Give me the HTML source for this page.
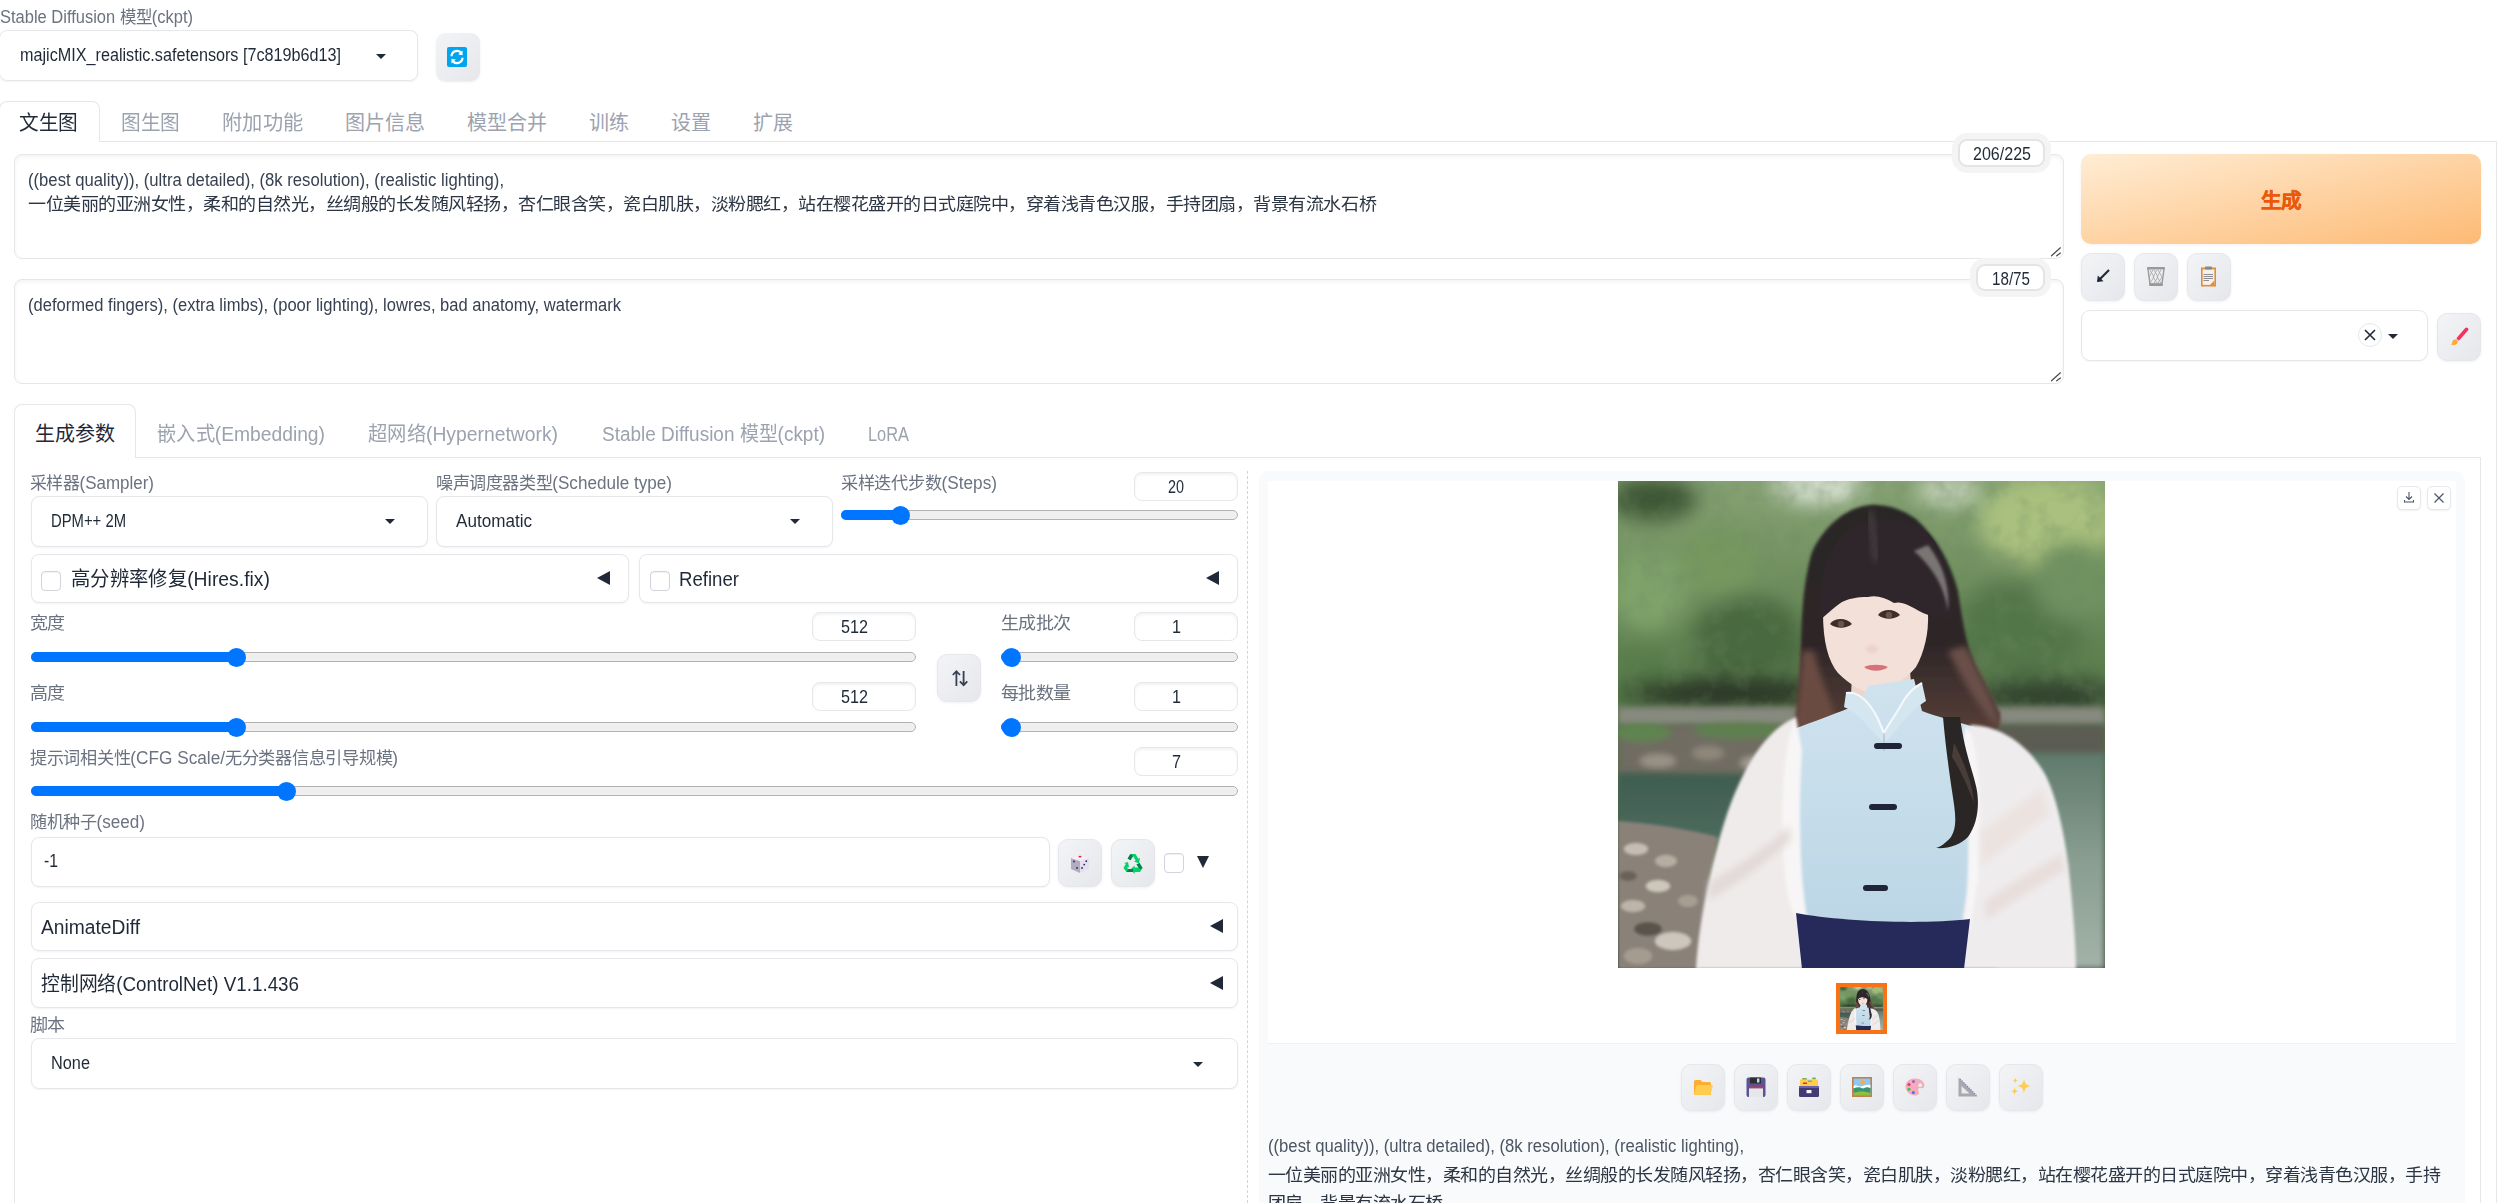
<!DOCTYPE html>
<html lang="zh-CN"><head><meta charset="utf-8"><style>*{margin:0;padding:0}
html,body{width:2505px;height:1203px;overflow:hidden;background:#fff}
body{position:relative;font-family:"Liberation Sans",sans-serif}
.a{position:absolute;box-sizing:border-box}
.t{position:absolute;white-space:pre;line-height:1;transform-origin:0 0}
svg.a{overflow:visible}
#t1{transform:scaleX(0.9420)}
#t2{transform:scaleX(0.9244)}
#t3{transform:scaleX(0.9833)}
#t4{transform:scaleX(0.9833)}
#t5{transform:scaleX(1.0125)}
#t6{transform:scaleX(1.0000)}
#t7{transform:scaleX(1.0000)}
#t8{transform:scaleX(1.0000)}
#t9{transform:scaleX(1.0000)}
#t10{transform:scaleX(1.0000)}
#t11{transform:scaleX(0.9522)}
#t12{transform:scaleX(1.0298)}
#t13{transform:scaleX(0.9458)}
#t14{transform:scaleX(0.9168)}
#t15{transform:scaleX(0.8676)}
#t16{transform:scaleX(1.0000)}
#t17{transform:scaleX(1.0000)}
#t18{transform:scaleX(0.9627)}
#t19{transform:scaleX(0.9659)}
#t20{transform:scaleX(0.9478)}
#t21{transform:scaleX(0.8195)}
#t22{transform:scaleX(0.9701)}
#t23{transform:scaleX(0.8475)}
#t24{transform:scaleX(0.9769)}
#t25{transform:scaleX(0.9767)}
#t26{transform:scaleX(0.9848)}
#t27{transform:scaleX(0.8218)}
#t28{transform:scaleX(0.9681)}
#t29{transform:scaleX(0.9305)}
#t30{transform:scaleX(1.0294)}
#t31{transform:scaleX(0.9246)}
#t32{transform:scaleX(1.0294)}
#t33{transform:scaleX(0.9246)}
#t34{transform:scaleX(1.0294)}
#t35{transform:scaleX(0.9246)}
#t36{transform:scaleX(1.0294)}
#t37{transform:scaleX(0.9246)}
#t38{transform:scaleX(0.9837)}
#t39{transform:scaleX(0.9246)}
#t40{transform:scaleX(0.9778)}
#t41{transform:scaleX(0.8996)}
#t42{transform:scaleX(0.9610)}
#t43{transform:scaleX(0.9397)}
#t44{transform:scaleX(1.0294)}
#t45{transform:scaleX(0.9320)}
#t46{transform:scaleX(0.9522)}
#t47{transform:scaleX(1.0290)}
#t48{transform:scaleX(1.0294)}</style></head><body>
<div id="t1" class="t" style="left:0.00px;top:9.19px;font-size:17.5px;color:#6b7280;font-weight:400;">Stable Diffusion 模型(ckpt)</div>
<div class="a" style="left:-1px;top:30px;width:419px;height:51px;border:1px solid #e5e7eb;border-radius:8px;box-shadow:0 1px 2px rgba(0,0,0,.05);background:#fff"></div>
<div id="t2" class="t" style="left:20.00px;top:47.19px;font-size:17.5px;color:#1f2937;font-weight:400;">majicMIX_realistic.safetensors [7c819b6d13]</div>
<div class="a" style="left:376px;top:54px;width:0;height:0;border-left:5px solid transparent;border-right:5px solid transparent;border-top:5px solid #1f2937"></div>
<div class="a" style="left:436px;top:33px;width:44px;height:48px;border-radius:9px;background:linear-gradient(135deg,#f3f4f6,#e5e7eb);box-shadow:0 1px 2px rgba(0,0,0,.08)"></div>
<svg class="a" style="left:447px;top:47px" width="20" height="20" viewBox="0 0 20 20"><rect width="20" height="20" rx="2" fill="#00a4ef"/><path d="M4.5 9.2 A5.5 5.5 0 0 1 14.6 6.4" stroke="#fff" stroke-width="2.2" fill="none"/><path d="M15.5 3.6 L15.6 8.2 L11.2 7.6 Z" fill="#fff"/><path d="M15.5 10.8 A5.5 5.5 0 0 1 5.4 13.6" stroke="#fff" stroke-width="2.2" fill="none"/><path d="M4.5 16.4 L4.4 11.8 L8.8 12.4 Z" fill="#fff"/></svg>
<div class="a" style="left:-1px;top:101px;width:101px;height:41px;border:1px solid #e5e7eb;border-bottom:none;border-radius:8px 8px 0 0;background:#fff"></div>
<div class="a" style="left:99px;top:141px;width:2398px;height:1px;background:#e5e7eb"></div>
<div class="a" style="left:2496px;top:141px;width:1px;height:1062px;background:#e5e7eb"></div>
<div id="t3" class="t" style="left:19.00px;top:112.57px;font-size:20px;color:#1f2937;font-weight:400;">文生图</div>
<div id="t4" class="t" style="left:121.00px;top:112.57px;font-size:20px;color:#9ca3af;font-weight:400;">图生图</div>
<div id="t5" class="t" style="left:222.00px;top:112.57px;font-size:20px;color:#9ca3af;font-weight:400;">附加功能</div>
<div id="t6" class="t" style="left:345.00px;top:112.57px;font-size:20px;color:#9ca3af;font-weight:400;">图片信息</div>
<div id="t7" class="t" style="left:467.00px;top:112.57px;font-size:20px;color:#9ca3af;font-weight:400;">模型合并</div>
<div id="t8" class="t" style="left:589.00px;top:112.57px;font-size:20px;color:#9ca3af;font-weight:400;">训练</div>
<div id="t9" class="t" style="left:671.00px;top:112.57px;font-size:20px;color:#9ca3af;font-weight:400;">设置</div>
<div id="t10" class="t" style="left:753.00px;top:112.57px;font-size:20px;color:#9ca3af;font-weight:400;">扩展</div>
<div class="a" style="left:14px;top:154px;width:2050px;height:105px;border:1px solid #e5e7eb;border-radius:8px;background:#fff;box-shadow:inset 0 2px 4px rgba(0,0,0,.05)"></div>
<div id="t11" class="t" style="left:28.00px;top:171.69px;font-size:17.5px;color:#374151;font-weight:400;">((best quality)), (ultra detailed), (8k resolution), (realistic lighting),</div>
<div id="t12" class="t" style="left:28.00px;top:195.69px;font-size:17.5px;color:#2b3543;font-weight:400;">一位美丽的亚洲女性，柔和的自然光，丝绸般的长发随风轻扬，杏仁眼含笑，瓷白肌肤，淡粉腮红，站在樱花盛开的日式庭院中，穿着浅青色汉服，手持团扇，背景有流水石桥</div>
<div class="a" style="left:14px;top:279px;width:2050px;height:105px;border:1px solid #e5e7eb;border-radius:8px;background:#fff;box-shadow:inset 0 2px 4px rgba(0,0,0,.05)"></div>
<div id="t13" class="t" style="left:28.00px;top:296.69px;font-size:17.5px;color:#374151;font-weight:400;">(deformed fingers), (extra limbs), (poor lighting), lowres, bad anatomy, watermark</div>
<svg class="a" style="left:2050px;top:246px" width="12" height="12" viewBox="0 0 12 12"><path d="M1.5 9.8 L10.4 1.8 M6.7 9.8 L10.4 7" stroke="#4a4a4a" stroke-width="1.2" stroke-linecap="round"/></svg>
<svg class="a" style="left:2050px;top:371px" width="12" height="12" viewBox="0 0 12 12"><path d="M1.5 9.8 L10.4 1.8 M6.7 9.8 L10.4 7" stroke="#4a4a4a" stroke-width="1.2" stroke-linecap="round"/></svg>
<div class="a" style="left:1952px;top:133px;width:99px;height:40px;border-radius:15px;background:#f4f4f5"></div>
<div class="a" style="left:1958px;top:139px;width:87px;height:28px;border:2px solid #e4e4e6;border-radius:9px;background:#fff"></div>
<div id="t14" class="t" style="left:1972.50px;top:146.19px;font-size:17.5px;color:#1f2937;font-weight:400;">206/225</div>
<div class="a" style="left:1970px;top:258px;width:81px;height:39px;border-radius:15px;background:#f4f4f5"></div>
<div class="a" style="left:1976px;top:264px;width:69px;height:27px;border:2px solid #e4e4e6;border-radius:9px;background:#fff"></div>
<div id="t15" class="t" style="left:1991.50px;top:271.19px;font-size:17.5px;color:#1f2937;font-weight:400;">18/75</div>
<div class="a" style="left:2081px;top:154px;width:400px;height:90px;border-radius:10px;background:linear-gradient(to bottom right,#ffedd5,#fdba74);box-shadow:0 1px 3px rgba(0,0,0,.06)"></div>
<div id="t16" class="t" style="left:2261.00px;top:191.15px;font-size:20.5px;color:#ea580c;font-weight:700;-webkit-text-stroke:0.35px #ea580c">生成</div>
<div class="a" style="left:2081px;top:253px;width:44px;height:48px;border:1px solid #e5e7eb;border-radius:10px;background:linear-gradient(to bottom right,#f3f4f6,#e5e7eb);box-shadow:0 1px 3px rgba(0,0,0,.06)"></div>
<div class="a" style="left:2134px;top:253px;width:44px;height:48px;border:1px solid #e5e7eb;border-radius:10px;background:linear-gradient(to bottom right,#f3f4f6,#e5e7eb);box-shadow:0 1px 3px rgba(0,0,0,.06)"></div>
<div class="a" style="left:2187px;top:253px;width:44px;height:48px;border:1px solid #e5e7eb;border-radius:10px;background:linear-gradient(to bottom right,#f3f4f6,#e5e7eb);box-shadow:0 1px 3px rgba(0,0,0,.06)"></div>
<svg class="a" style="left:2094px;top:267px" width="18" height="18" viewBox="0 0 18 18"><path d="M15 3 L4 14" stroke="#1f2937" stroke-width="2.2"/><path d="M3 15 L3.8 8.5 L9.5 14.2 Z" fill="#1f2937"/></svg>
<svg class="a" style="left:2145px;top:266px" width="22" height="22" viewBox="0 0 22 22"><rect x="2" y="1" width="18" height="2.6" rx="1" fill="#999"/><rect x="4" y="17.5" width="14" height="2.4" rx="1" fill="#999"/><path d="M3 3 L5 18 L17 18 L19 3" fill="none" stroke="#999" stroke-width="1.4"/><path d="M5 4 L9 11 L5 17 M9 4 L13 11 L9 17 M13 4 L17 11 L13 17 M8 4 L4 11 M12 4 L8 11 L12 17 M16 4 L12 11 L16 17" stroke="#aaa" stroke-width="0.9" fill="none"/></svg>
<svg class="a" style="left:2200px;top:266px" width="18" height="22" viewBox="0 0 18 22"><rect x="1" y="1.5" width="15" height="19" fill="#e48d2c"/><rect x="2.6" y="3.4" width="11.8" height="15.5" fill="#f3f0f5"/><rect x="5" y="0.5" width="7" height="3" rx="1" fill="#888"/><path d="M3.5 8.5 H13 M3.5 10.5 H13 M3.5 12.5 H13 M3.5 14.5 H9" stroke="#8d8d8d" stroke-width="1" fill="none"/><path d="M14.4 14.5 L14.4 18.9 L10 18.9 Z" fill="#e48d2c"/></svg>
<div class="a" style="left:2081px;top:310px;width:347px;height:51px;border:1px solid #e5e7eb;border-radius:9px;background:#fff;box-shadow:0 1px 2px rgba(0,0,0,.04)"></div>
<div class="a" style="left:2358px;top:323px;width:24px;height:24px;border:1px solid #e5e7eb;border-radius:50%"></div>
<svg class="a" style="left:2364px;top:329px" width="12" height="12" viewBox="0 0 12 12"><path d="M1 1 L11 11 M11 1 L1 11" stroke="#1f2937" stroke-width="1.6"/></svg>
<div class="a" style="left:2388px;top:334px;width:0;height:0;border-left:5px solid transparent;border-right:5px solid transparent;border-top:5px solid #1f2937"></div>
<div class="a" style="left:2437px;top:313px;width:44px;height:48px;border:1px solid #e5e7eb;border-radius:10px;background:linear-gradient(to bottom right,#f3f4f6,#e5e7eb);box-shadow:0 1px 3px rgba(0,0,0,.06)"></div>
<svg class="a" style="left:2449px;top:326px" width="22" height="22" viewBox="0 0 22 22"><path d="M17.6 3.3 L9.4 12.6" stroke="#f92f60" stroke-width="3.6" stroke-linecap="round"/><path d="M8.6 13.4 L6.8 15.2" stroke="#ccd6dd" stroke-width="2.6"/><path d="M6.6 13.6 C9 14.2 9.6 17.5 7 18.6 C5.2 19.4 3.6 18.8 2.4 19.3 C2.2 18.4 3 17.8 3.2 16.5 C3.5 14.6 4.6 13.3 6.6 13.6 Z" fill="#ffac33"/></svg>
<div class="a" style="left:14px;top:404px;width:122px;height:54px;border:1px solid #e5e7eb;border-bottom:none;border-radius:8px 8px 0 0;background:#fff"></div>
<div class="a" style="left:135px;top:457px;width:2346px;height:1px;background:#e5e7eb"></div>
<div class="a" style="left:14px;top:457px;width:1px;height:746px;background:#e5e7eb"></div>
<div class="a" style="left:2480px;top:457px;width:1px;height:746px;background:#e5e7eb"></div>
<div id="t17" class="t" style="left:35.00px;top:423.57px;font-size:20px;color:#1f2937;font-weight:400;">生成参数</div>
<div id="t18" class="t" style="left:157.00px;top:423.57px;font-size:20px;color:#9ca3af;font-weight:400;">嵌入式(Embedding)</div>
<div id="t19" class="t" style="left:368.00px;top:423.57px;font-size:20px;color:#9ca3af;font-weight:400;">超网络(Hypernetwork)</div>
<div id="t20" class="t" style="left:602.00px;top:423.57px;font-size:20px;color:#9ca3af;font-weight:400;">Stable Diffusion 模型(ckpt)</div>
<div id="t21" class="t" style="left:868.00px;top:423.57px;font-size:20px;color:#9ca3af;font-weight:400;">LoRA</div>
<div id="t22" class="t" style="left:30.00px;top:475.19px;font-size:17.5px;color:#6b7280;font-weight:400;">采样器(Sampler)</div>
<div class="a" style="left:31px;top:496px;width:397px;height:51px;border:1px solid #e5e7eb;border-radius:8px;background:#fff;box-shadow:0 1px 2px rgba(0,0,0,.05)"></div>
<div id="t23" class="t" style="left:51.00px;top:513.19px;font-size:17.5px;color:#1f2937;font-weight:400;">DPM++ 2M</div>
<div class="a" style="left:385px;top:519px;width:0;height:0;border-left:5px solid transparent;border-right:5px solid transparent;border-top:5px solid #1f2937"></div>
<div id="t24" class="t" style="left:436.00px;top:475.19px;font-size:17.5px;color:#6b7280;font-weight:400;">噪声调度器类型(Schedule type)</div>
<div class="a" style="left:436px;top:496px;width:397px;height:51px;border:1px solid #e5e7eb;border-radius:8px;background:#fff;box-shadow:0 1px 2px rgba(0,0,0,.05)"></div>
<div id="t25" class="t" style="left:456.00px;top:513.19px;font-size:17.5px;color:#1f2937;font-weight:400;">Automatic</div>
<div class="a" style="left:790px;top:519px;width:0;height:0;border-left:5px solid transparent;border-right:5px solid transparent;border-top:5px solid #1f2937"></div>
<div id="t26" class="t" style="left:841.00px;top:475.19px;font-size:17.5px;color:#6b7280;font-weight:400;">采样迭代步数(Steps)</div>
<div class="a" style="left:1134px;top:472px;width:104px;height:29px;border:1px solid #e5e7eb;border-radius:8px;background:#fff;box-shadow:inset 0 2px 3px rgba(0,0,0,.05)"></div>
<div id="t27" class="t" style="left:1168.00px;top:478.69px;font-size:17.5px;color:#1f2937;font-weight:400;">20</div>
<div class="a" style="left:841px;top:510px;width:397px;height:10px;border:1px solid #b2b2b2;border-radius:5px;background:#efefef"></div>
<div class="a" style="left:841px;top:510px;width:59px;height:10px;border-radius:5px;background:#0075ff"></div>
<div class="a" style="left:890.5px;top:505.5px;width:19.0px;height:19.0px;border-radius:50%;background:#0075ff"></div>
<div class="a" style="left:31px;top:554px;width:598px;height:49px;border:1px solid #e5e7eb;border-radius:8px;background:#fff;box-shadow:0 1px 2px rgba(0,0,0,.05)"></div>
<div class="a" style="left:41px;top:571px;width:20px;height:20px;border:1px solid #d1d5db;border-radius:4px;background:#fff;box-shadow:inset 0 1px 1px rgba(0,0,0,.06)"></div>
<div id="t28" class="t" style="left:71.00px;top:569.07px;font-size:20px;color:#1f2937;font-weight:400;">高分辨率修复(Hires.fix)</div>
<div class="a" style="left:597px;top:571px;width:0;height:0;border-top:7px solid transparent;border-bottom:7px solid transparent;border-right:13px solid #1f2937"></div>
<div class="a" style="left:639px;top:554px;width:599px;height:49px;border:1px solid #e5e7eb;border-radius:8px;background:#fff;box-shadow:0 1px 2px rgba(0,0,0,.05)"></div>
<div class="a" style="left:650px;top:571px;width:20px;height:20px;border:1px solid #d1d5db;border-radius:4px;background:#fff;box-shadow:inset 0 1px 1px rgba(0,0,0,.06)"></div>
<div id="t29" class="t" style="left:679.00px;top:569.07px;font-size:20px;color:#1f2937;font-weight:400;">Refiner</div>
<div class="a" style="left:1206px;top:571px;width:0;height:0;border-top:7px solid transparent;border-bottom:7px solid transparent;border-right:13px solid #1f2937"></div>
<div id="t30" class="t" style="left:30.00px;top:615.19px;font-size:17.5px;color:#6b7280;font-weight:400;">宽度</div>
<div class="a" style="left:812px;top:612px;width:104px;height:29px;border:1px solid #e5e7eb;border-radius:8px;background:#fff;box-shadow:inset 0 2px 3px rgba(0,0,0,.05)"></div>
<div id="t31" class="t" style="left:840.50px;top:618.69px;font-size:17.5px;color:#1f2937;font-weight:400;">512</div>
<div class="a" style="left:31px;top:652px;width:885px;height:10px;border:1px solid #b2b2b2;border-radius:5px;background:#efefef"></div>
<div class="a" style="left:31px;top:652px;width:205px;height:10px;border-radius:5px;background:#0075ff"></div>
<div class="a" style="left:226.5px;top:647.5px;width:19.0px;height:19.0px;border-radius:50%;background:#0075ff"></div>
<div id="t32" class="t" style="left:30.00px;top:685.19px;font-size:17.5px;color:#6b7280;font-weight:400;">高度</div>
<div class="a" style="left:812px;top:682px;width:104px;height:29px;border:1px solid #e5e7eb;border-radius:8px;background:#fff;box-shadow:inset 0 2px 3px rgba(0,0,0,.05)"></div>
<div id="t33" class="t" style="left:840.50px;top:688.69px;font-size:17.5px;color:#1f2937;font-weight:400;">512</div>
<div class="a" style="left:31px;top:722px;width:885px;height:10px;border:1px solid #b2b2b2;border-radius:5px;background:#efefef"></div>
<div class="a" style="left:31px;top:722px;width:205px;height:10px;border-radius:5px;background:#0075ff"></div>
<div class="a" style="left:226.5px;top:717.5px;width:19.0px;height:19.0px;border-radius:50%;background:#0075ff"></div>
<div class="a" style="left:937px;top:654px;width:44px;height:48px;border:1px solid #e5e7eb;border-radius:10px;background:linear-gradient(to bottom right,#f3f4f6,#e5e7eb);box-shadow:0 1px 3px rgba(0,0,0,.06)"></div>
<svg class="a" style="left:950px;top:668px" width="20" height="20" viewBox="0 0 20 20"><path d="M6.4 18 V3.5 M2.8 7 L6.4 3.2 L10 7" stroke="#374151" stroke-width="1.8" fill="none"/><path d="M13.6 3 V17 M9.9 13.4 L13.6 17.2 L17.3 13.4" stroke="#374151" stroke-width="1.8" fill="none"/></svg>
<div id="t34" class="t" style="left:1001.00px;top:615.19px;font-size:17.5px;color:#6b7280;font-weight:400;">生成批次</div>
<div class="a" style="left:1134px;top:612px;width:104px;height:29px;border:1px solid #e5e7eb;border-radius:8px;background:#fff;box-shadow:inset 0 2px 3px rgba(0,0,0,.05)"></div>
<div id="t35" class="t" style="left:1171.50px;top:618.69px;font-size:17.5px;color:#1f2937;font-weight:400;">1</div>
<div class="a" style="left:1001px;top:652px;width:237px;height:10px;border:1px solid #b2b2b2;border-radius:5px;background:#efefef"></div>
<div class="a" style="left:1001px;top:652px;width:10px;height:10px;border-radius:5px;background:#0075ff"></div>
<div class="a" style="left:1001.5px;top:647.5px;width:19.0px;height:19.0px;border-radius:50%;background:#0075ff"></div>
<div id="t36" class="t" style="left:1001.00px;top:685.19px;font-size:17.5px;color:#6b7280;font-weight:400;">每批数量</div>
<div class="a" style="left:1134px;top:682px;width:104px;height:29px;border:1px solid #e5e7eb;border-radius:8px;background:#fff;box-shadow:inset 0 2px 3px rgba(0,0,0,.05)"></div>
<div id="t37" class="t" style="left:1171.50px;top:688.69px;font-size:17.5px;color:#1f2937;font-weight:400;">1</div>
<div class="a" style="left:1001px;top:722px;width:237px;height:10px;border:1px solid #b2b2b2;border-radius:5px;background:#efefef"></div>
<div class="a" style="left:1001px;top:722px;width:10px;height:10px;border-radius:5px;background:#0075ff"></div>
<div class="a" style="left:1001.5px;top:717.5px;width:19.0px;height:19.0px;border-radius:50%;background:#0075ff"></div>
<div id="t38" class="t" style="left:30.00px;top:750.19px;font-size:17.5px;color:#6b7280;font-weight:400;">提示词相关性(CFG Scale/无分类器信息引导规模)</div>
<div class="a" style="left:1134px;top:747px;width:104px;height:29px;border:1px solid #e5e7eb;border-radius:8px;background:#fff;box-shadow:inset 0 2px 3px rgba(0,0,0,.05)"></div>
<div id="t39" class="t" style="left:1171.50px;top:753.69px;font-size:17.5px;color:#1f2937;font-weight:400;">7</div>
<div class="a" style="left:31px;top:786px;width:1207px;height:10px;border:1px solid #b2b2b2;border-radius:5px;background:#efefef"></div>
<div class="a" style="left:31px;top:786px;width:255px;height:10px;border-radius:5px;background:#0075ff"></div>
<div class="a" style="left:276.5px;top:781.5px;width:19.0px;height:19.0px;border-radius:50%;background:#0075ff"></div>
<div id="t40" class="t" style="left:30.00px;top:814.19px;font-size:17.5px;color:#6b7280;font-weight:400;">随机种子(seed)</div>
<div class="a" style="left:31px;top:837px;width:1019px;height:50px;border:1px solid #e5e7eb;border-radius:8px;background:#fff;box-shadow:0 1px 2px rgba(0,0,0,.05)"></div>
<div id="t41" class="t" style="left:44.00px;top:853.19px;font-size:17.5px;color:#1f2937;font-weight:400;">-1</div>
<div class="a" style="left:1058px;top:839px;width:44px;height:48px;border:1px solid #e5e7eb;border-radius:10px;background:linear-gradient(to bottom right,#f3f4f6,#e5e7eb);box-shadow:0 1px 3px rgba(0,0,0,.06)"></div>
<svg class="a" style="left:1070px;top:854px" width="20" height="20" viewBox="0 0 20 20"><path d="M1 4 L10 1 L19 4 L19 15 L10 19 L1 15 Z" fill="#e6dff0"/><path d="M1 4 L10 7 L10 19 L1 15 Z" fill="#b3abbf"/><path d="M1 4 L10 1 L19 4 L10 7 Z" fill="#f4f0f8"/><ellipse cx="10" cy="2.6" rx="1.6" ry="0.9" fill="#e8222e"/><circle cx="4" cy="7.5" r="0.9" fill="#292a5a"/><circle cx="7" cy="14" r="0.9" fill="#292a5a"/><circle cx="16.3" cy="7.2" r="0.9" fill="#292a5a"/><circle cx="14.2" cy="10.6" r="0.9" fill="#292a5a"/><circle cx="12" cy="14" r="0.9" fill="#292a5a"/></svg>
<div class="a" style="left:1111px;top:839px;width:44px;height:48px;border:1px solid #e5e7eb;border-radius:10px;background:linear-gradient(to bottom right,#f3f4f6,#e5e7eb);box-shadow:0 1px 3px rgba(0,0,0,.06)"></div>
<svg class="a" style="left:1123px;top:853px" width="20" height="20" viewBox="0 0 20 20"><path d="M7.5 1 L12.5 1 L15.3 5.8 L17 4.8 L16 10.5 L11 8.5 L12.7 7.5 L10 3 L7.5 7.2 L4.6 5.5 Z" fill="#00d26a"/><path d="M4.6 5.5 L7.5 1 L10 3 L7.5 7.2 Z" fill="#0f7a50"/><path d="M16.5 10 L19.5 15 L17 19 L11.5 19 L11.5 21 L7.5 16.5 L11.5 12.5 L11.5 14.5 L15.5 14.5 L13.5 11.5 Z" fill="#00d26a"/><path d="M13.5 11.5 L16.5 10 L19.5 15 L17 16.2 Z" fill="#0f7a50"/><path d="M5 9 L6 14 L4 14.5 L6.2 17 H10 V19 L3.5 19 L0.5 15 L2.8 11 L1.2 10 Z" fill="#00d26a"/><path d="M3.5 19 L10 19 L10 16 L5.5 16 Z" fill="#0f7a50"/></svg>
<div class="a" style="left:1164px;top:853px;width:20px;height:20px;border:1px solid #d1d5db;border-radius:4px;background:#fff;box-shadow:inset 0 1px 1px rgba(0,0,0,.06)"></div>
<div class="a" style="left:1197px;top:856px;width:0;height:0;border-left:6.5px solid transparent;border-right:6.5px solid transparent;border-top:12px solid #1f2937"></div>
<div class="a" style="left:31px;top:902px;width:1207px;height:49px;border:1px solid #e5e7eb;border-radius:8px;background:#fff;box-shadow:0 1px 2px rgba(0,0,0,.05)"></div>
<div id="t42" class="t" style="left:41.00px;top:917.07px;font-size:20px;color:#1f2937;font-weight:400;">AnimateDiff</div>
<div class="a" style="left:1210px;top:919px;width:0;height:0;border-top:7px solid transparent;border-bottom:7px solid transparent;border-right:13px solid #1f2937"></div>
<div class="a" style="left:31px;top:958px;width:1207px;height:50px;border:1px solid #e5e7eb;border-radius:8px;background:#fff;box-shadow:0 1px 2px rgba(0,0,0,.05)"></div>
<div id="t43" class="t" style="left:41.00px;top:974.07px;font-size:20px;color:#1f2937;font-weight:400;">控制网络(ControlNet) V1.1.436</div>
<div class="a" style="left:1210px;top:976px;width:0;height:0;border-top:7px solid transparent;border-bottom:7px solid transparent;border-right:13px solid #1f2937"></div>
<div id="t44" class="t" style="left:30.00px;top:1017.19px;font-size:17.5px;color:#6b7280;font-weight:400;">脚本</div>
<div class="a" style="left:31px;top:1038px;width:1207px;height:51px;border:1px solid #e5e7eb;border-radius:8px;background:#fff;box-shadow:0 1px 2px rgba(0,0,0,.05)"></div>
<div id="t45" class="t" style="left:51.00px;top:1055.19px;font-size:17.5px;color:#1f2937;font-weight:400;">None</div>
<div class="a" style="left:1193px;top:1062px;width:0;height:0;border-left:5px solid transparent;border-right:5px solid transparent;border-top:5px solid #1f2937"></div>
<div class="a" style="left:1247px;top:471px;width:0;height:732px;border-left:1px dashed #d1d5db"></div>
<div class="a" style="left:1259px;top:471px;width:1206px;height:732px;border-radius:10px 10px 0 0;background:#f9fafb"></div>
<div class="a" style="left:1268px;top:481px;width:1188px;height:563px;background:#fff;border-bottom:1px solid #eef0f3"></div>
<div class="a" style="left:2397px;top:486px;width:24px;height:24px;border:1px solid #e5e7eb;border-radius:5px;background:#fff;box-shadow:0 1px 2px rgba(0,0,0,.06)"></div>
<div class="a" style="left:2427px;top:486px;width:24px;height:24px;border:1px solid #e5e7eb;border-radius:5px;background:#fff;box-shadow:0 1px 2px rgba(0,0,0,.06)"></div>
<svg class="a" style="left:2402px;top:490px" width="14" height="14" viewBox="0 0 14 14"><path d="M7 2 V9 M4 6.5 L7 9.5 L10 6.5 M2.5 10 V12 H11.5 V10" stroke="#4b5563" stroke-width="1.1" fill="none"/></svg>
<svg class="a" style="left:2432px;top:491px" width="14" height="14" viewBox="0 0 14 14"><path d="M2.5 2.5 L11.5 11.5 M11.5 2.5 L2.5 11.5" stroke="#4b5563" stroke-width="1.2"/></svg>
<div class="a" style="left:1618px;top:481px;width:487px;height:487px;overflow:hidden"><svg width="487" height="487" viewBox="0 0 487 487" style="display:block">
<defs>
<filter id="pb10" x="-30%" y="-30%" width="160%" height="160%"><feGaussianBlur stdDeviation="10"/></filter>
<filter id="pb5" x="-30%" y="-30%" width="160%" height="160%"><feGaussianBlur stdDeviation="5"/></filter>
<filter id="pb3" x="-30%" y="-30%" width="160%" height="160%"><feGaussianBlur stdDeviation="3"/></filter>
<filter id="pb15" x="-30%" y="-30%" width="160%" height="160%"><feGaussianBlur stdDeviation="1.5"/></filter>
<filter id="pb07" x="-10%" y="-10%" width="120%" height="120%"><feGaussianBlur stdDeviation="0.7"/></filter>
<linearGradient id="pbg" x1="0" y1="0" x2="0" y2="1"><stop offset="0" stop-color="#86a273"/><stop offset="0.35" stop-color="#5f8150"/><stop offset="0.75" stop-color="#41603a"/><stop offset="1" stop-color="#2c382a"/></linearGradient>
<linearGradient id="pwl" x1="0" y1="0" x2="0" y2="1"><stop offset="0" stop-color="#3f5c50"/><stop offset="1" stop-color="#4f6d60"/></linearGradient>
<linearGradient id="pwr" x1="0" y1="0" x2="0" y2="1"><stop offset="0" stop-color="#5f7a6c"/><stop offset="0.5" stop-color="#8a9e92"/><stop offset="1" stop-color="#a3b2a8"/></linearGradient>
<linearGradient id="pdr" x1="0" y1="0" x2="0" y2="1"><stop offset="0" stop-color="#cfe3ee"/><stop offset="1" stop-color="#bcd6e6"/></linearGradient>
<linearGradient id="phair" x1="0" y1="0" x2="0" y2="1"><stop offset="0" stop-color="#2a2527"/><stop offset="0.6" stop-color="#2e2628"/><stop offset="1" stop-color="#5a4038"/></linearGradient>
<filter id="ptex" x="0" y="0" width="100%" height="100%"><feTurbulence type="fractalNoise" baseFrequency="0.045" numOctaves="3" seed="7"/><feColorMatrix values="0 0 0 0 0.15  0 0 0 0 0.25  0 0 0 0 0.12  0 0 0 -2.2 1.25"/></filter>
</defs>
<rect width="487" height="487" fill="url(#pbg)"/>
<g filter="url(#pb10)">
<ellipse cx="200" cy="6" rx="45" ry="16" fill="#dde4d8"/>
<ellipse cx="330" cy="10" rx="30" ry="14" fill="#c9d6bf"/>
<ellipse cx="430" cy="40" rx="70" ry="45" fill="#a9c07e"/>
<ellipse cx="35" cy="18" rx="45" ry="22" fill="#3c5634"/>
<ellipse cx="30" cy="110" rx="40" ry="40" fill="#7fa26a"/>
<ellipse cx="100" cy="80" rx="40" ry="35" fill="#76985f"/>
<ellipse cx="130" cy="160" rx="55" ry="45" fill="#48693f"/>
<ellipse cx="30" cy="200" rx="40" ry="30" fill="#577c4a"/>
<ellipse cx="400" cy="150" rx="65" ry="50" fill="#52764a"/>
<ellipse cx="455" cy="100" rx="40" ry="40" fill="#6f9260"/>
<ellipse cx="110" cy="212" rx="110" ry="16" fill="#2a3528"/>
<ellipse cx="430" cy="215" rx="70" ry="18" fill="#33422f"/>
</g>
<rect width="487" height="228" filter="url(#ptex)" opacity="0.35"/>
<rect x="0" y="226" width="487" height="18" fill="#878a7f" filter="url(#pb3)"/>
<!-- left shore with grass + rocks -->
<g filter="url(#pb3)">
<rect x="0" y="244" width="175" height="52" fill="#6f6c62"/>
<ellipse cx="25" cy="252" rx="28" ry="9" fill="#5f8450"/>
<ellipse cx="120" cy="250" rx="45" ry="8" fill="#5f8050"/>
<ellipse cx="40" cy="280" rx="18" ry="7" fill="#9a9286"/>
<ellipse cx="90" cy="272" rx="16" ry="7" fill="#8f887c"/>
<ellipse cx="140" cy="282" rx="18" ry="7" fill="#a39b8f"/>
</g>
<path d="M0 292 L170 294 L176 370 L90 360 L0 345 Z" fill="url(#pwl)" filter="url(#pb3)"/>
<!-- left rocks -->
<g filter="url(#pb15)">
<path d="M0 340 C30 342 70 348 100 356 L92 400 L82 488 L0 488 Z" fill="#8a8279"/>
<ellipse cx="18" cy="368" rx="12" ry="6" fill="#c6beb2"/>
<ellipse cx="48" cy="380" rx="11" ry="6" fill="#b7aea2"/>
<ellipse cx="10" cy="395" rx="9" ry="5" fill="#6a625a"/>
<ellipse cx="40" cy="405" rx="12" ry="6" fill="#cfc7bb"/>
<ellipse cx="70" cy="420" rx="10" ry="6" fill="#a79e92"/>
<ellipse cx="15" cy="425" rx="12" ry="6" fill="#bdb5a9"/>
<ellipse cx="30" cy="448" rx="14" ry="7" fill="#5a534c"/>
<ellipse cx="55" cy="460" rx="18" ry="9" fill="#cdc6bc"/>
<ellipse cx="20" cy="475" rx="14" ry="8" fill="#a59c90"/>
</g>
<!-- right shore + water -->
<rect x="370" y="244" width="117" height="32" fill="#5b5b53" filter="url(#pb3)"/>
<rect x="380" y="272" width="107" height="216" fill="url(#pwr)" filter="url(#pb3)"/>
<!-- hair back mass -->
<path d="M252 24 C226 26 202 50 193 74 C186 100 184 126 183 160 C182 196 181 222 176 250 L232 244 L300 230 C320 240 340 250 360 255 C372 258 384 250 382 232 C372 214 366 200 360 190 C350 170 346 150 340 110 C332 80 318 56 298 38 C284 28 268 23 252 24 Z" fill="url(#phair)" filter="url(#pb15)"/>
<path d="M184 170 C182 200 180 228 176 250 C192 250 206 244 218 236 C210 215 200 190 196 170 Z" fill="#6b4c42" filter="url(#pb3)"/>
<path d="M330 170 C345 200 362 230 382 248 C378 222 362 195 348 165 Z" fill="#6b5048" filter="url(#pb3)"/>
<!-- neck -->
<path d="M234 192 L292 190 L296 238 L232 238 Z" fill="#ecd5cc" filter="url(#pb07)"/>
<!-- face -->
<path d="M205 132 C205 160 210 180 220 192 C232 204 244 211 256 212 C270 210 288 198 298 186 C306 172 311 152 310 132 C290 118 270 112 256 112 C238 112 220 120 205 132 Z" fill="#f3e0d9" filter="url(#pb07)"/>
<ellipse cx="254" cy="168" rx="6" ry="4" fill="#ead2ca" filter="url(#pb15)"/>
<ellipse cx="320" cy="126" rx="5" ry="8" fill="#e07e6c"/>
<!-- bangs -->
<path d="M201 140 C199 100 208 66 232 48 C252 34 290 34 310 52 C326 70 334 100 336 138 C326 140 316 136 305 132 C290 124 284 120 276 122 C266 116 258 114 250 116 C238 116 230 118 224 121 C214 128 208 134 201 140 Z" fill="#2e2729" filter="url(#pb07)"/>
<path d="M296 70 C314 86 326 104 330 130 C332 108 326 84 310 64 Z" fill="#7a7474" filter="url(#pb15)"/>
<path d="M252 30 C254 45 256 60 258 80" stroke="#443e40" stroke-width="6" fill="none" filter="url(#pb3)"/>
<!-- eyes, brows, mouth -->
<path d="M212 143 C216 137 228 136 234 143 C228 148 218 148 212 143 Z" fill="#3d2e2a"/>
<circle cx="223" cy="143" r="3.2" fill="#6a5548"/>
<path d="M260 134 C264 128 276 127 282 134 C276 139 266 139 260 134 Z" fill="#3d2e2a"/>
<circle cx="271" cy="134" r="3.2" fill="#6a5548"/>
<path d="M246 186 C252 183 264 183 270 186 C264 191 252 191 246 186 Z" fill="#d7727a"/>
<!-- dress -->
<path d="M172 250 C195 240 222 232 242 222 L250 205 L296 198 L304 230 C320 236 336 240 356 246 L356 447 L176 447 Z" fill="url(#pdr)" filter="url(#pb07)"/>
<path d="M228 212 C240 210 250 220 258 234 C262 242 264 248 266 252 C270 244 276 236 282 226 C288 214 296 206 304 202 L308 220 C298 226 288 236 276 252 L266 262 L256 252 C246 240 236 230 226 226 Z" fill="#d4e6f0" filter="url(#pb07)"/><path d="M228 212 C240 210 250 220 258 234 C262 242 264 248 266 252 C270 244 276 236 282 226 C288 214 296 206 304 202" stroke="#f4f8fb" stroke-width="2.2" fill="none"/><path d="M266 252 L266 270" stroke="#9fb6c4" stroke-width="1"/>
<!-- cloak left -->
<g filter="url(#pb15)">
<path d="M178 236 C150 248 128 280 110 330 C95 375 82 430 78 488 L186 488 L188 440 C176 400 170 350 172 300 C173 270 176 250 178 236 Z" fill="#efebeb"/>
<path d="M178 236 C166 260 162 320 166 380 C168 420 176 440 186 447 L190 440 C182 400 180 330 184 270 Z" fill="#f7f5f5"/>
<path d="M92 400 C120 385 150 365 172 345 L172 360 C150 380 122 402 90 420 Z" fill="#e2dad8" filter="url(#pb3)"/>
</g>
<!-- cloak right -->
<g filter="url(#pb15)">
<path d="M352 244 C380 244 410 262 428 295 C440 320 448 360 452 400 C456 440 458 470 458 488 L340 488 L344 440 C354 390 358 320 352 280 Z" fill="#efecee"/>
<path d="M348 244 C362 262 364 320 360 400 L352 447 L346 447 C352 390 352 320 344 262 Z" fill="#f7f5f6"/>
<path d="M362 350 C388 332 408 318 424 306 L432 334 C414 346 394 362 364 386 Z" fill="#ece3e0" filter="url(#pb3)"/>
<path d="M366 420 C392 402 418 386 444 372 L448 390 C424 402 398 420 368 440 Z" fill="#e8dfdd" filter="url(#pb3)"/>
</g>
<!-- braid -->
<path d="M325 236 C327 260 331 290 334 310 C337 330 340 345 333 356 C328 362 322 366 318 367 C330 368 342 364 350 356 C360 342 362 322 358 305 C354 288 346 268 342 236 Z" fill="#2c2527" filter="url(#pb07)"/>
<path d="M336 262 C346 282 354 300 356 322 C350 306 342 288 334 276 Z" fill="#4a3c38" filter="url(#pb07)"/>
<!-- skirt -->
<path d="M178 432 C220 440 300 444 352 438 L346 488 L184 488 Z" fill="#262b5a" filter="url(#pb07)"/>
<!-- frogs -->
<rect x="256" y="262" width="28" height="6" rx="3" fill="#1f2438"/>
<rect x="251" y="323" width="28" height="6" rx="3" fill="#1f2438"/>
<rect x="245" y="404" width="25" height="6" rx="3" fill="#1f2438"/>
</svg>
</div>
<div class="a" style="left:1836px;top:983px;width:51px;height:51px;border:4px solid #f97316;overflow:hidden;background:#fff"></div>
<div class="a" style="left:1840px;top:987px;width:43px;height:43px;overflow:hidden"><div style="transform:scale(0.0883);transform-origin:0 0;width:487px;height:487px"><svg width="487" height="487" viewBox="0 0 487 487" style="display:block">
<defs>
<filter id="pb10" x="-30%" y="-30%" width="160%" height="160%"><feGaussianBlur stdDeviation="10"/></filter>
<filter id="pb5" x="-30%" y="-30%" width="160%" height="160%"><feGaussianBlur stdDeviation="5"/></filter>
<filter id="pb3" x="-30%" y="-30%" width="160%" height="160%"><feGaussianBlur stdDeviation="3"/></filter>
<filter id="pb15" x="-30%" y="-30%" width="160%" height="160%"><feGaussianBlur stdDeviation="1.5"/></filter>
<filter id="pb07" x="-10%" y="-10%" width="120%" height="120%"><feGaussianBlur stdDeviation="0.7"/></filter>
<linearGradient id="pbg" x1="0" y1="0" x2="0" y2="1"><stop offset="0" stop-color="#86a273"/><stop offset="0.35" stop-color="#5f8150"/><stop offset="0.75" stop-color="#41603a"/><stop offset="1" stop-color="#2c382a"/></linearGradient>
<linearGradient id="pwl" x1="0" y1="0" x2="0" y2="1"><stop offset="0" stop-color="#3f5c50"/><stop offset="1" stop-color="#4f6d60"/></linearGradient>
<linearGradient id="pwr" x1="0" y1="0" x2="0" y2="1"><stop offset="0" stop-color="#5f7a6c"/><stop offset="0.5" stop-color="#8a9e92"/><stop offset="1" stop-color="#a3b2a8"/></linearGradient>
<linearGradient id="pdr" x1="0" y1="0" x2="0" y2="1"><stop offset="0" stop-color="#cfe3ee"/><stop offset="1" stop-color="#bcd6e6"/></linearGradient>
<linearGradient id="phair" x1="0" y1="0" x2="0" y2="1"><stop offset="0" stop-color="#2a2527"/><stop offset="0.6" stop-color="#2e2628"/><stop offset="1" stop-color="#5a4038"/></linearGradient>
<filter id="ptex" x="0" y="0" width="100%" height="100%"><feTurbulence type="fractalNoise" baseFrequency="0.045" numOctaves="3" seed="7"/><feColorMatrix values="0 0 0 0 0.15  0 0 0 0 0.25  0 0 0 0 0.12  0 0 0 -2.2 1.25"/></filter>
</defs>
<rect width="487" height="487" fill="url(#pbg)"/>
<g filter="url(#pb10)">
<ellipse cx="200" cy="6" rx="45" ry="16" fill="#dde4d8"/>
<ellipse cx="330" cy="10" rx="30" ry="14" fill="#c9d6bf"/>
<ellipse cx="430" cy="40" rx="70" ry="45" fill="#a9c07e"/>
<ellipse cx="35" cy="18" rx="45" ry="22" fill="#3c5634"/>
<ellipse cx="30" cy="110" rx="40" ry="40" fill="#7fa26a"/>
<ellipse cx="100" cy="80" rx="40" ry="35" fill="#76985f"/>
<ellipse cx="130" cy="160" rx="55" ry="45" fill="#48693f"/>
<ellipse cx="30" cy="200" rx="40" ry="30" fill="#577c4a"/>
<ellipse cx="400" cy="150" rx="65" ry="50" fill="#52764a"/>
<ellipse cx="455" cy="100" rx="40" ry="40" fill="#6f9260"/>
<ellipse cx="110" cy="212" rx="110" ry="16" fill="#2a3528"/>
<ellipse cx="430" cy="215" rx="70" ry="18" fill="#33422f"/>
</g>
<rect width="487" height="228" filter="url(#ptex)" opacity="0.35"/>
<rect x="0" y="226" width="487" height="18" fill="#878a7f" filter="url(#pb3)"/>
<!-- left shore with grass + rocks -->
<g filter="url(#pb3)">
<rect x="0" y="244" width="175" height="52" fill="#6f6c62"/>
<ellipse cx="25" cy="252" rx="28" ry="9" fill="#5f8450"/>
<ellipse cx="120" cy="250" rx="45" ry="8" fill="#5f8050"/>
<ellipse cx="40" cy="280" rx="18" ry="7" fill="#9a9286"/>
<ellipse cx="90" cy="272" rx="16" ry="7" fill="#8f887c"/>
<ellipse cx="140" cy="282" rx="18" ry="7" fill="#a39b8f"/>
</g>
<path d="M0 292 L170 294 L176 370 L90 360 L0 345 Z" fill="url(#pwl)" filter="url(#pb3)"/>
<!-- left rocks -->
<g filter="url(#pb15)">
<path d="M0 340 C30 342 70 348 100 356 L92 400 L82 488 L0 488 Z" fill="#8a8279"/>
<ellipse cx="18" cy="368" rx="12" ry="6" fill="#c6beb2"/>
<ellipse cx="48" cy="380" rx="11" ry="6" fill="#b7aea2"/>
<ellipse cx="10" cy="395" rx="9" ry="5" fill="#6a625a"/>
<ellipse cx="40" cy="405" rx="12" ry="6" fill="#cfc7bb"/>
<ellipse cx="70" cy="420" rx="10" ry="6" fill="#a79e92"/>
<ellipse cx="15" cy="425" rx="12" ry="6" fill="#bdb5a9"/>
<ellipse cx="30" cy="448" rx="14" ry="7" fill="#5a534c"/>
<ellipse cx="55" cy="460" rx="18" ry="9" fill="#cdc6bc"/>
<ellipse cx="20" cy="475" rx="14" ry="8" fill="#a59c90"/>
</g>
<!-- right shore + water -->
<rect x="370" y="244" width="117" height="32" fill="#5b5b53" filter="url(#pb3)"/>
<rect x="380" y="272" width="107" height="216" fill="url(#pwr)" filter="url(#pb3)"/>
<!-- hair back mass -->
<path d="M252 24 C226 26 202 50 193 74 C186 100 184 126 183 160 C182 196 181 222 176 250 L232 244 L300 230 C320 240 340 250 360 255 C372 258 384 250 382 232 C372 214 366 200 360 190 C350 170 346 150 340 110 C332 80 318 56 298 38 C284 28 268 23 252 24 Z" fill="url(#phair)" filter="url(#pb15)"/>
<path d="M184 170 C182 200 180 228 176 250 C192 250 206 244 218 236 C210 215 200 190 196 170 Z" fill="#6b4c42" filter="url(#pb3)"/>
<path d="M330 170 C345 200 362 230 382 248 C378 222 362 195 348 165 Z" fill="#6b5048" filter="url(#pb3)"/>
<!-- neck -->
<path d="M234 192 L292 190 L296 238 L232 238 Z" fill="#ecd5cc" filter="url(#pb07)"/>
<!-- face -->
<path d="M205 132 C205 160 210 180 220 192 C232 204 244 211 256 212 C270 210 288 198 298 186 C306 172 311 152 310 132 C290 118 270 112 256 112 C238 112 220 120 205 132 Z" fill="#f3e0d9" filter="url(#pb07)"/>
<ellipse cx="254" cy="168" rx="6" ry="4" fill="#ead2ca" filter="url(#pb15)"/>
<ellipse cx="320" cy="126" rx="5" ry="8" fill="#e07e6c"/>
<!-- bangs -->
<path d="M201 140 C199 100 208 66 232 48 C252 34 290 34 310 52 C326 70 334 100 336 138 C326 140 316 136 305 132 C290 124 284 120 276 122 C266 116 258 114 250 116 C238 116 230 118 224 121 C214 128 208 134 201 140 Z" fill="#2e2729" filter="url(#pb07)"/>
<path d="M296 70 C314 86 326 104 330 130 C332 108 326 84 310 64 Z" fill="#7a7474" filter="url(#pb15)"/>
<path d="M252 30 C254 45 256 60 258 80" stroke="#443e40" stroke-width="6" fill="none" filter="url(#pb3)"/>
<!-- eyes, brows, mouth -->
<path d="M212 143 C216 137 228 136 234 143 C228 148 218 148 212 143 Z" fill="#3d2e2a"/>
<circle cx="223" cy="143" r="3.2" fill="#6a5548"/>
<path d="M260 134 C264 128 276 127 282 134 C276 139 266 139 260 134 Z" fill="#3d2e2a"/>
<circle cx="271" cy="134" r="3.2" fill="#6a5548"/>
<path d="M246 186 C252 183 264 183 270 186 C264 191 252 191 246 186 Z" fill="#d7727a"/>
<!-- dress -->
<path d="M172 250 C195 240 222 232 242 222 L250 205 L296 198 L304 230 C320 236 336 240 356 246 L356 447 L176 447 Z" fill="url(#pdr)" filter="url(#pb07)"/>
<path d="M228 212 C240 210 250 220 258 234 C262 242 264 248 266 252 C270 244 276 236 282 226 C288 214 296 206 304 202 L308 220 C298 226 288 236 276 252 L266 262 L256 252 C246 240 236 230 226 226 Z" fill="#d4e6f0" filter="url(#pb07)"/><path d="M228 212 C240 210 250 220 258 234 C262 242 264 248 266 252 C270 244 276 236 282 226 C288 214 296 206 304 202" stroke="#f4f8fb" stroke-width="2.2" fill="none"/><path d="M266 252 L266 270" stroke="#9fb6c4" stroke-width="1"/>
<!-- cloak left -->
<g filter="url(#pb15)">
<path d="M178 236 C150 248 128 280 110 330 C95 375 82 430 78 488 L186 488 L188 440 C176 400 170 350 172 300 C173 270 176 250 178 236 Z" fill="#efebeb"/>
<path d="M178 236 C166 260 162 320 166 380 C168 420 176 440 186 447 L190 440 C182 400 180 330 184 270 Z" fill="#f7f5f5"/>
<path d="M92 400 C120 385 150 365 172 345 L172 360 C150 380 122 402 90 420 Z" fill="#e2dad8" filter="url(#pb3)"/>
</g>
<!-- cloak right -->
<g filter="url(#pb15)">
<path d="M352 244 C380 244 410 262 428 295 C440 320 448 360 452 400 C456 440 458 470 458 488 L340 488 L344 440 C354 390 358 320 352 280 Z" fill="#efecee"/>
<path d="M348 244 C362 262 364 320 360 400 L352 447 L346 447 C352 390 352 320 344 262 Z" fill="#f7f5f6"/>
<path d="M362 350 C388 332 408 318 424 306 L432 334 C414 346 394 362 364 386 Z" fill="#ece3e0" filter="url(#pb3)"/>
<path d="M366 420 C392 402 418 386 444 372 L448 390 C424 402 398 420 368 440 Z" fill="#e8dfdd" filter="url(#pb3)"/>
</g>
<!-- braid -->
<path d="M325 236 C327 260 331 290 334 310 C337 330 340 345 333 356 C328 362 322 366 318 367 C330 368 342 364 350 356 C360 342 362 322 358 305 C354 288 346 268 342 236 Z" fill="#2c2527" filter="url(#pb07)"/>
<path d="M336 262 C346 282 354 300 356 322 C350 306 342 288 334 276 Z" fill="#4a3c38" filter="url(#pb07)"/>
<!-- skirt -->
<path d="M178 432 C220 440 300 444 352 438 L346 488 L184 488 Z" fill="#262b5a" filter="url(#pb07)"/>
<!-- frogs -->
<rect x="256" y="262" width="28" height="6" rx="3" fill="#1f2438"/>
<rect x="251" y="323" width="28" height="6" rx="3" fill="#1f2438"/>
<rect x="245" y="404" width="25" height="6" rx="3" fill="#1f2438"/>
</svg>
</div></div>
<div class="a" style="left:1681px;top:1064px;width:44px;height:47px;border:1px solid #e5e7eb;border-radius:10px;background:linear-gradient(to bottom right,#f3f4f6,#e5e7eb);box-shadow:0 1px 3px rgba(0,0,0,.06)"></div>
<div class="a" style="left:1734px;top:1064px;width:44px;height:47px;border:1px solid #e5e7eb;border-radius:10px;background:linear-gradient(to bottom right,#f3f4f6,#e5e7eb);box-shadow:0 1px 3px rgba(0,0,0,.06)"></div>
<div class="a" style="left:1787px;top:1064px;width:44px;height:47px;border:1px solid #e5e7eb;border-radius:10px;background:linear-gradient(to bottom right,#f3f4f6,#e5e7eb);box-shadow:0 1px 3px rgba(0,0,0,.06)"></div>
<div class="a" style="left:1840px;top:1064px;width:44px;height:47px;border:1px solid #e5e7eb;border-radius:10px;background:linear-gradient(to bottom right,#f3f4f6,#e5e7eb);box-shadow:0 1px 3px rgba(0,0,0,.06)"></div>
<div class="a" style="left:1893px;top:1064px;width:44px;height:47px;border:1px solid #e5e7eb;border-radius:10px;background:linear-gradient(to bottom right,#f3f4f6,#e5e7eb);box-shadow:0 1px 3px rgba(0,0,0,.06)"></div>
<div class="a" style="left:1946px;top:1064px;width:44px;height:47px;border:1px solid #e5e7eb;border-radius:10px;background:linear-gradient(to bottom right,#f3f4f6,#e5e7eb);box-shadow:0 1px 3px rgba(0,0,0,.06)"></div>
<div class="a" style="left:1999px;top:1064px;width:44px;height:47px;border:1px solid #e5e7eb;border-radius:10px;background:linear-gradient(to bottom right,#f3f4f6,#e5e7eb);box-shadow:0 1px 3px rgba(0,0,0,.06)"></div>
<svg class="a" style="left:1693px;top:1077px" width="20" height="20" viewBox="0 0 20 20"><path d="M1 4.5 Q1 3 2.5 3 H7.5 L9.5 5 H16.5 Q18 5 18 6.5 V17 Q18 18 17 18 H2 Q1 18 1 17 Z" fill="#ffac33"/><path d="M4.5 8 H19 Q20 8 19.7 9.2 L17.6 17.2 Q17.3 18 16.5 18 H1.8 Q0.8 18 1.1 17 L3.2 9 Q3.5 8 4.5 8 Z" fill="#ffcc4d"/></svg>
<svg class="a" style="left:1746px;top:1077px" width="20" height="20" viewBox="0 0 20 20"><rect x="0.5" y="0.5" width="19" height="19.5" rx="2" fill="#5b5394"/><rect x="4" y="0.5" width="11" height="6" fill="#292f33"/><rect x="11" y="1.5" width="2.4" height="4" fill="#ccd6dd"/><rect x="3" y="9.6" width="14" height="1.8" fill="#dd2e44"/><rect x="3" y="11.4" width="14" height="8.6" fill="#e6e7e8"/></svg>
<svg class="a" style="left:1799px;top:1077px" width="20" height="20" viewBox="0 0 20 20"><rect x="3" y="1" width="5" height="2" rx="1" fill="#77b255"/><rect x="13" y="0.5" width="4" height="2" rx="1" fill="#77b255"/><rect x="1" y="2.5" width="18" height="9" rx="1" fill="#ffcc4d"/><rect x="4" y="5.5" width="4" height="1.5" fill="#dd2e44"/><rect x="9" y="3.5" width="4" height="1.5" fill="#55acee"/><rect x="0" y="9" width="20" height="11" rx="1.5" fill="#413a75"/><rect x="0" y="9" width="20" height="2" fill="#6a5fa8"/><rect x="7.5" y="13" width="5" height="3.2" fill="#f5f5f5"/></svg>
<svg class="a" style="left:1852px;top:1077px" width="20" height="20" viewBox="0 0 20 20"><rect x="0" y="0" width="20" height="20" fill="#c1814f"/><rect x="1.6" y="1.6" width="16.8" height="16.8" fill="#88c9f9"/><circle cx="10.5" cy="5.3" r="2.2" fill="#ffac33"/><path d="M1.6 9 C4 7 6 10 9 9.5 C12 9 14 7 18.4 8 V11 H1.6 Z" fill="#fff"/><path d="M1.6 11.5 C5 9.5 9 10 11 12 C13 10 16 9.5 18.4 11 V18.4 H1.6 Z" fill="#3b946f"/><path d="M1.6 16 C6 14 13 14 18.4 16 V18.4 H1.6 Z" fill="#8fbf3f"/></svg>
<svg class="a" style="left:1905px;top:1077px" width="20" height="20" viewBox="0 0 20 20"><path d="M9 1.5 C15 1 19.5 4.5 19.5 8.5 C19.5 11 17.5 11.5 15.5 11 C13.5 10.5 12.5 12 13.5 14 C14.5 16 14 18.5 10 18.5 C4.5 18.5 0.5 14 0.5 9.5 C0.5 5 4 2 9 1.5 Z" fill="#f4abba"/><circle cx="15.2" cy="8.2" r="1.9" fill="#eceff3"/><circle cx="8.5" cy="4.5" r="1.5" fill="#9266cc"/><circle cx="4" cy="7.5" r="1.5" fill="#f0287e"/><circle cx="4" cy="12.2" r="1.5" fill="#2ec85a"/><circle cx="8.3" cy="15.5" r="1.5" fill="#4f6cf0"/></svg>
<svg class="a" style="left:1958px;top:1077px" width="20" height="20" viewBox="0 0 20 20"><path d="M0.5 0.5 L19.5 19.5 H0.5 Z" fill="#a8a8ad"/><path d="M3.5 9 L11.5 16.6 H3.5 Z" fill="#e9e9ee"/><path d="M2 2 L18.5 18.5" stroke="#8e7ec4" stroke-width="1.4" stroke-dasharray="1.2 1.3"/></svg>
<svg class="a" style="left:2011px;top:1077px" width="20" height="20" viewBox="0 0 20 20"><path d="M13 1.5 C13.6 6.5 15 8 19.5 9 C15 10 13.6 11.5 13 17 C12.4 11.5 11 10 6.5 9 C11 8 12.4 6.5 13 1.5 Z" fill="#ffcc4d"/><path d="M4.3 0.5 C4.6 2.5 5.3 3.2 7.3 3.5 C5.3 3.8 4.6 4.5 4.3 6.5 C4 4.5 3.3 3.8 1.3 3.5 C3.3 3.2 4 2.5 4.3 0.5 Z" fill="#ffcc4d"/><path d="M3.6 10.5 C4 13 4.8 13.8 7.2 14.2 C4.8 14.6 4 15.4 3.6 18 C3.2 15.4 2.4 14.6 0 14.2 C2.4 13.8 3.2 13 3.6 10.5 Z" fill="#ffcc4d"/></svg>
<div id="t46" class="t" style="left:1268.00px;top:1137.69px;font-size:17.5px;color:#4b5563;font-weight:400;">((best quality)), (ultra detailed), (8k resolution), (realistic lighting),</div>
<div id="t47" class="t" style="left:1268.00px;top:1166.69px;font-size:17.5px;color:#2b3543;font-weight:400;">一位美丽的亚洲女性，柔和的自然光，丝绸般的长发随风轻扬，杏仁眼含笑，瓷白肌肤，淡粉腮红，站在樱花盛开的日式庭院中，穿着浅青色汉服，手持</div>
<div id="t48" class="t" style="left:1268.00px;top:1195.19px;font-size:17.5px;color:#2b3543;font-weight:400;">团扇，背景有流水石桥</div>
</body></html>
